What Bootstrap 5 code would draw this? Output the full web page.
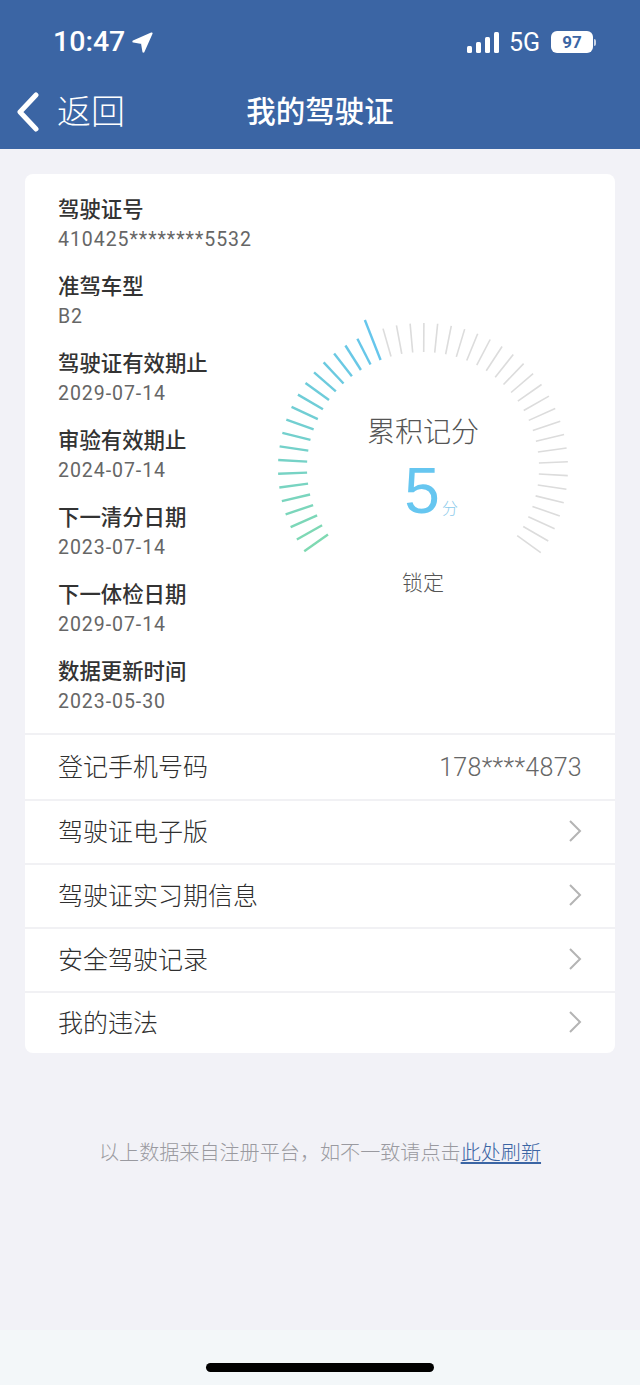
<!DOCTYPE html>
<html lang="zh-CN">
<head>
    <meta charset="UTF-8">
    <meta name="viewport" content="width=device-width, initial-scale=1.0">
    <title>我的驾驶证</title>
    <link href="https://cdn.jsdelivr.net/npm/bootstrap@5.3.0/dist/css/bootstrap.min.css" rel="stylesheet">
    <style>
        html, body { height: 100%; }
        body { background: #f2f2f7; font-family: "Roboto", "Noto Sans CJK SC", sans-serif; color: #333; }
        .screen { height: 1385px; overflow: hidden; }
        .app-head { background: #3b65a4; height: 149px; color: #fff; border-bottom: 1px solid #3b65a4; }
        .status-row { height: 84px; padding: 0 44px 0 53px; }
        .clock { font-size: 28.5px; font-weight: 500; line-height: 1; }
        .net { font-size: 25px; line-height: 1; margin: 0 11px 0 10px; }
        .batt { width: 42px; height: 22px; background: #fff; color: #3b65a4; border-radius: 6px; font-size: 17px; font-weight: 700; line-height: 22px; text-align: center; }
        .batt-tip { width: 2px; height: 7px; background: #c9d4e6; border-radius: 0 2px 2px 0; margin-left: 1px; }
        .status-arrow { margin-left: -1px; }
        .title-row { height: 56px; padding-left: 16px; position: relative; }
        .back-txt { font-size: 34px; font-weight: 300; line-height: 1; margin-left: 17px; }
        .page-name { font-size: 29.5px; font-weight: 500; line-height: 1; position: absolute; left: 0; right: 0; top: 14px; text-align: center; }
        .info-card { margin: 25px 25px 0; border-radius: 8px; background: #fff; overflow: hidden; }
        .info-top { height: 559px; padding: 23px 0 0 33px; }
        .info-col { width: 214px; flex-shrink: 0; }
        .info-item { height: 77px; }
        .info-label { font-size: 21.4px; font-weight: 500; line-height: 26px; color: #333; }
        .info-val { font-size: 19.5px; letter-spacing: .95px; line-height: 28px; color: #666; margin-top: 3px; }
        .gauge-wrap { flex-grow: 1; }
        .gauge-wrap svg { display: block; margin-top: 97px; }
        .row-line { height: 64px; padding: 2px 33px 0; border-top: 2px solid #f1f1f4; font-size: 25px; color: #2f2f2f; font-weight: 300; }
        .row-line .num { color: #666; font-size: 25px; font-weight: 300; letter-spacing: .3px; }
        .row-line svg { margin-top: -4px; }
        .row-first { height: 66px; }
        .row-last { height: 62px; }
        .foot-note { margin-top: 86px; text-align: center; font-size: 20.1px; line-height: 28px; color: #9a9aa0; font-weight: 300; }
        .foot-note a { color: #3b65a4; }
        .home-strip { height: 55px; background: #f3f7f9; margin-top: 163px; padding-top: 33px; }
        .home-bar { width: 228px; height: 9px; background: #000; border-radius: 5px; }
    </style>
</head>
<body>
    <div class="screen">
        <div class="app-head">
            <div class="status-row d-flex align-items-center justify-content-between">
                <div class="d-flex align-items-center gap-2">
                    <span class="clock">10:47</span>
                    <svg class="status-arrow" width="21" height="21" viewBox="0 0 22 22"><path d="M20.5 1.5 L1.5 10 L10.5 11.5 L12 20.5 Z" fill="#fff" stroke="#fff" stroke-width="2.2" stroke-linejoin="round"/></svg>
                </div>
                <div class="d-flex align-items-center">
                    <svg width="32" height="21" viewBox="0 0 32 21" fill="#fff">
                        <rect x="0" y="14" width="5" height="7" rx="1.5"/>
                        <rect x="9" y="10" width="5" height="11" rx="1.5"/>
                        <rect x="18" y="5" width="5" height="16" rx="1.5"/>
                        <rect x="27" y="0" width="5" height="21" rx="1.5"/>
                    </svg>
                    <span class="net">5G</span>
                    <span class="batt">97</span>
                    <span class="batt-tip"></span>
                </div>
            </div>
            <div class="title-row d-flex align-items-center">
                <svg width="24" height="40" viewBox="0 0 24 40"><path d="M20 3 L4 20 L20 37" fill="none" stroke="#fff" stroke-width="5" stroke-linecap="round" stroke-linejoin="round"/></svg>
                <span class="back-txt">返回</span>
                <span class="page-name">我的驾驶证</span>
            </div>
        </div>

        <div class="info-card">
            <div class="info-top d-flex">
                <div class="info-col" id="infoCol"></div>
                <div class="gauge-wrap">
                    <svg id="gauge" width="345" height="310" viewBox="0 0 345 310"></svg>
                </div>
            </div>
            <div class="row-line row-first d-flex align-items-center justify-content-between">
                <span>登记手机号码</span><span class="num">178****4873</span>
            </div>
            <div id="rowList"></div>
        </div>

        <p class="foot-note mb-0">以上数据来自注册平台，如不一致请点击<a href="#">此处刷新</a></p>

        <div class="home-strip d-flex justify-content-center">
            <div class="home-bar"></div>
        </div>
    </div>

    <script src="https://cdn.jsdelivr.net/npm/bootstrap@5.3.0/dist/js/bootstrap.bundle.min.js"></script>
    <script>
        const infoItems = [
            ['驾驶证号', '410425********5532'],
            ['准驾车型', 'B2'],
            ['驾驶证有效期止', '2029-07-14'],
            ['审验有效期止', '2024-07-14'],
            ['下一清分日期', '2023-07-14'],
            ['下一体检日期', '2029-07-14'],
            ['数据更新时间', '2023-05-30']
        ];
        document.getElementById('infoCol').innerHTML = infoItems.map(item => `
            <div class="info-item">
                <div class="info-label">${item[0]}</div>
                <div class="info-val text-nowrap">${item[1]}</div>
            </div>
        `).join('');

        const rows = ['驾驶证电子版', '驾驶证实习期信息', '安全驾驶记录', '我的违法'];
        document.getElementById('rowList').innerHTML = rows.map((name, i) => `
            <div class="row-line ${i === rows.length - 1 ? 'row-last' : ''} d-flex align-items-center justify-content-between">
                <span>${name}</span>
                <svg width="14" height="24" viewBox="0 0 14 24"><path d="M2 2 L12 12 L2 22" fill="none" stroke="#b4b4b4" stroke-width="2"/></svg>
            </div>
        `).join('');

        // gauge ticks, svg origin sits at page x=272 (card 25 + col 33 + 214)
        const cx = 151, cy = 174;
        const start = -125, step = 5.45, total = 47, active = 19;
        let ticks = '';
        for (let i = 0; i < total; i++) {
            const a = (start + i * step) * Math.PI / 180;
            const r1 = 116, r2 = i === active ? 159 : 145;
            const t = Math.min(i / active, 1);
            const col = i > active ? '#dcdcdc'
                : `rgb(${Math.round(127 - 25 * t)},${Math.round(217 - 19 * t)},${Math.round(178 + 58 * t)})`;
            ticks += `<line x1="${cx + r1 * Math.sin(a)}" y1="${cy - r1 * Math.cos(a)}" x2="${cx + r2 * Math.sin(a)}" y2="${cy - r2 * Math.cos(a)}" stroke="${col}" stroke-width="${i > active ? 1.6 : 2.4}"/>`;
        }
        const cjk = `font-family="'Noto Sans CJK SC',sans-serif"`;
        ticks += `<text x="${cx}" y="148" text-anchor="middle" font-size="28" font-weight="300" fill="#555" ${cjk}>累积记分</text>`;
        ticks += `<text x="${cx - 1}" y="219" text-anchor="middle" font-size="64" fill="#66c6f0" font-family="'Liberation Sans',sans-serif">5</text>`;
        ticks += `<text x="178" y="220" text-anchor="middle" font-size="16" font-weight="300" fill="#8ccbeb" ${cjk}>分</text>`;
        ticks += `<text x="${cx}" y="296" text-anchor="middle" font-size="21" font-weight="300" fill="#555" ${cjk}>锁定</text>`;
        document.getElementById('gauge').innerHTML = ticks;
    </script>
</body>
</html>
